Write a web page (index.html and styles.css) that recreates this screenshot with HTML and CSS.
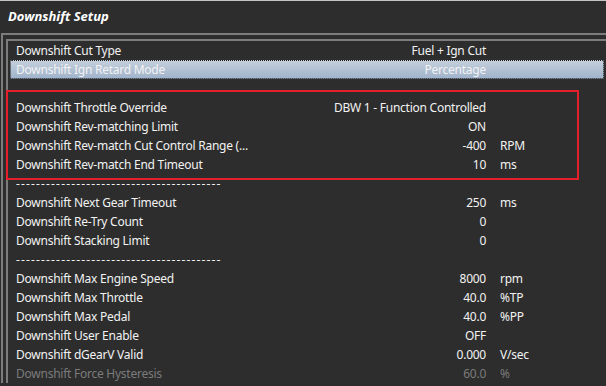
FILE: index.html
```html
<!DOCTYPE html>
<html lang="en">
<head>
    <meta charset="UTF-8">
    <title>Downshift Setup</title>
    <link rel="stylesheet" href="styles.css">
</head>
<body>
    <div class="panel">
        <div class="title">Downshift Setup</div>
        <div class="outer">
            <div class="inner">
                <div class="row"><span class="name">Downshift Cut Type</span><span class="value">Fuel + Ign Cut</span><span class="unit"></span></div>
                <div class="row selected"><span class="name">Downshift Ign Retard Mode</span><span class="value">Percentage</span><span class="unit"></span></div>
                <div class="row"><span class="name"></span><span class="value"></span><span class="unit"></span></div>
                <div class="row"><span class="name">Downshift Throttle Override</span><span class="value">DBW 1 - Function Controlled</span><span class="unit"></span></div>
                <div class="row"><span class="name">Downshift Rev-matching Limit</span><span class="value">ON</span><span class="unit"></span></div>
                <div class="row"><span class="name">Downshift Rev-match Cut Control Range (...</span><span class="value">-400</span><span class="unit">RPM</span></div>
                <div class="row"><span class="name">Downshift Rev-match End Timeout</span><span class="value">10</span><span class="unit">ms</span></div>
                <div class="row"><span class="name sep">-----------------------------------------</span><span class="value"></span><span class="unit"></span></div>
                <div class="row"><span class="name">Downshift Next Gear Timeout</span><span class="value">250</span><span class="unit">ms</span></div>
                <div class="row"><span class="name">Downshift Re-Try Count</span><span class="value">0</span><span class="unit"></span></div>
                <div class="row"><span class="name">Downshift Stacking Limit</span><span class="value">0</span><span class="unit"></span></div>
                <div class="row"><span class="name sep">-----------------------------------------</span><span class="value"></span><span class="unit"></span></div>
                <div class="row"><span class="name">Downshift Max Engine Speed</span><span class="value">8000</span><span class="unit">rpm</span></div>
                <div class="row"><span class="name">Downshift Max Throttle</span><span class="value">40.0</span><span class="unit">%TP</span></div>
                <div class="row"><span class="name">Downshift Max Pedal</span><span class="value">40.0</span><span class="unit">%PP</span></div>
                <div class="row"><span class="name">Downshift User Enable</span><span class="value">OFF</span><span class="unit"></span></div>
                <div class="row"><span class="name">Downshift dGearV Valid</span><span class="value">0.000</span><span class="unit">V/sec</span></div>
                <div class="row disabled"><span class="name">Downshift Force Hysteresis</span><span class="value">60.0</span><span class="unit">%</span></div>
            </div>
        </div>
        <div class="highlight"></div>
    </div>
</body>
</html>
```

FILE: styles.css
```css
html, body {
    margin: 0;
    padding: 0;
    background: #2d2d2d;
    height: 100%;
    overflow: hidden;
}
body {
    font-family: "Noto Sans", sans-serif;
    font-size: 12px;
    letter-spacing: -0.25px;
    color: #f2f2f2;
}
.panel {
    position: relative;
    border-top: 1px solid #c4c4c4;
    height: 100%;
}
.title {
    height: 32px;
    line-height: 31px;
    padding-left: 8px;
    font-size: 13px;
    font-weight: bold;
    font-style: italic;
    letter-spacing: 0;
    color: #ffffff;
}
.outer {
    margin-left: 1px;
    border-top: 2px solid #7c7c7c;
    border-left: 2px solid #7c7c7c;
    padding-top: 4px;
    padding-left: 3px;
}
.inner {
    border-top: 2px solid #7c7c7c;
    border-left: 2px solid #7c7c7c;
    padding-left: 1px;
}
.row {
    display: grid;
    grid-template-columns: 270px 200px 1fr;
    height: 19px;
    line-height: 19px;
    margin-left: 1px;
    margin-right: 2px;
    padding-left: 6px;
    white-space: nowrap;
}
.value {
    text-align: right;
}
.unit {
    padding-left: 14px;
}
.sep {
    letter-spacing: 1.15px;
}
.selected {
    background: linear-gradient(#c6d0dc, #9fb3cb);
    outline: 1px dotted #1a1a1a;
    outline-offset: -1px;
    border-radius: 2px;
}
.disabled {
    color: #7b7b7b;
}
.highlight {
    position: absolute;
    left: 6px;
    top: 89px;
    width: 569px;
    height: 86px;
    border: 2px solid #e3202b;
}
```
